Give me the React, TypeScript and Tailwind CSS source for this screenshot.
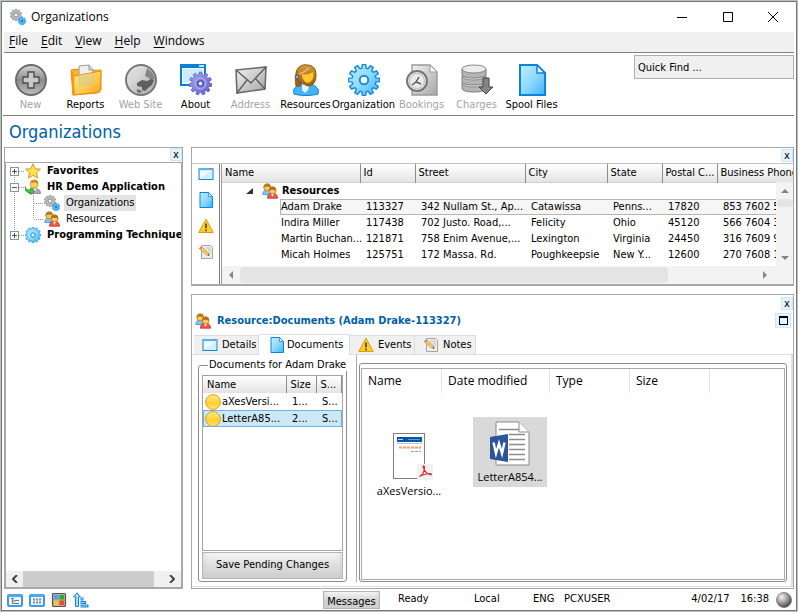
import React from "react";

const tahoma = "font-['DejaVu_Sans_Condensed','DejaVu_Sans',sans-serif]";
const segoe = "font-['Open_Sans','Noto_Sans',sans-serif]";

type IconProps = { size?: number };

function gearPath(c: number, outer: number, inner: number, teeth: number) {
  const pts: string[] = [];
  const step = (Math.PI * 2) / teeth;
  for (let i = 0; i < teeth; i++) {
    const a = i * step;
    const at = (r: number, t: number) =>
      `${(c + r * Math.sin(a + t * step)).toFixed(2)} ${(c - r * Math.cos(a + t * step)).toFixed(2)}`;
    pts.push(at(inner, -0.34), at(outer, -0.2), at(outer, 0.2), at(inner, 0.34));
  }
  return `M${pts.join("L")}Z`;
}

function Defs() {
  return (
    <svg width="0" height="0" className="absolute" aria-hidden="true">
      <defs>
        <linearGradient id="gGray" x1="0" y1="0" x2="1" y2="1">
          <stop offset="0" stopColor="#f2f2f2" />
          <stop offset="1" stopColor="#a6a6a6" />
        </linearGradient>
        <linearGradient id="gDark" x1="0" y1="0" x2="0" y2="1">
          <stop offset="0" stopColor="#d8d8d8" />
          <stop offset="0.5" stopColor="#8a8a8a" />
          <stop offset="1" stopColor="#bdbdbd" />
        </linearGradient>
        <linearGradient id="gBlue" x1="0" y1="0" x2="1" y2="1">
          <stop offset="0" stopColor="#c4ecff" />
          <stop offset="0.5" stopColor="#8fd9ff" />
          <stop offset="1" stopColor="#3fb4f7" />
        </linearGradient>
        <linearGradient id="gOrange" x1="0" y1="0" x2="1" y2="1">
          <stop offset="0" stopColor="#fff3a0" />
          <stop offset="0.5" stopColor="#ffd75a" />
          <stop offset="1" stopColor="#ff9a1c" />
        </linearGradient>
        <linearGradient id="gHair" x1="0" y1="0" x2="0" y2="1">
          <stop offset="0" stopColor="#d79a3c" />
          <stop offset="1" stopColor="#9a5c0a" />
        </linearGradient>
        <linearGradient id="gViolet" x1="0" y1="0" x2="1" y2="1">
          <stop offset="0" stopColor="#aaa8f0" />
          <stop offset="1" stopColor="#5f5cc9" />
        </linearGradient>
        <radialGradient id="gBall" cx="0.35" cy="0.3" r="0.7">
          <stop offset="0" stopColor="#f4f4f4" />
          <stop offset="0.5" stopColor="#a5a5a5" />
          <stop offset="1" stopColor="#4e4e4e" />
        </radialGradient>
        <linearGradient id="gSun" x1="0" y1="0" x2="0" y2="1">
          <stop offset="0" stopColor="#ffe98a" />
          <stop offset="0.6" stopColor="#ffcf2e" />
          <stop offset="1" stopColor="#ffe680" />
        </linearGradient>
      </defs>
    </svg>
  );
}

function Svg({ size, box, children }: { size: number; box: number; children: React.ReactNode }) {
  return (
    <svg width={size} height={size} viewBox={`0 0 ${box} ${box}`} className="block shrink-0" aria-hidden="true">
      {children}
    </svg>
  );
}

const NewIcon = () => (
  <Svg size={32} box={32}>
    <circle cx="16" cy="16" r="15" fill="url(#gDark)" stroke="#6b6b6b" strokeWidth="2" />
    <path d="M13 8h6v5h5v6h-5v5h-6v-5H8v-6h5z" fill="#c9c9c9" stroke="#4f4f4f" strokeWidth="1.4" />
  </Svg>
);

const ReportsIcon = () => (
  <Svg size={32} box={32}>
    <path d="M1 6l9-1 2 2 19-1v20l-4 3-24 2z" fill="#ffb428" stroke="#f08a08" />
    <path d="M9 2l10-1 4 4v14H9z" fill="#efefef" stroke="#999" />
    <path d="M19 1v5h5" fill="#d5d5d5" stroke="#999" />
    <path d="M4 12l27-5-1 21-27 3z" fill="url(#gOrange)" fillOpacity="0.85" stroke="#f38f0d" />
    <path d="M8 12l16-3v12l-15 2z" fill="#d8c48a" fillOpacity="0.6" />
    <path d="M2 8l2 22" stroke="#ff9414" strokeWidth="2" />
  </Svg>
);

const GlobeIcon = () => (
  <Svg size={32} box={32}>
    <circle cx="16" cy="16" r="15" fill="url(#gGray)" stroke="#777" strokeWidth="2" />
    <path d="M4 9l5-4 6-2 2 5-4 3-1 5-5 2-4-2z" fill="#d9d9d9" />
    <path d="M22 4l5 4 3 6-3 3-3-3-4-2 1-4z" fill="#858585" />
    <path d="M12 19l5-3 5 1 4-2 3 1-2 5-4 3-3 3-3-1v-3l-5-1z" fill="#5f5f5f" />
    <path d="M12 25l5 2-2 2-3-1z" fill="#6d6d6d" />
  </Svg>
);

const AboutIcon = () => (
  <Svg size={32} box={32}>
    <rect x="1" y="2" width="24" height="19" fill="#f2fbff" stroke="#0a7fd6" strokeWidth="2" />
    <rect x="0" y="0" width="26" height="4" fill="#0a7fd6" />
    <rect x="19" y="1" width="5" height="2" fill="#bfe5ff" />
    <path d="M3 5h20v8L5 19H3z" fill="#c9efff" />
    <g transform="translate(9 8)">
      <path d={gearPath(11.5, 11.4, 8.8, 11)} fill="url(#gViolet)" stroke="#5a57c0" strokeWidth="0.8" />
      <circle cx="11.5" cy="11.5" r="5.5" fill="#8b88e0" stroke="#b9b7f5" />
      <circle cx="11.5" cy="11.5" r="2.6" fill="#e6f3ff" stroke="#4845b0" strokeWidth="1.4" />
    </g>
  </Svg>
);

const AddressIcon = () => (
  <Svg size={32} box={32}>
    <path d="M1 6l30-3-1 22-28 4z" fill="url(#gGray)" stroke="#6c6c6c" strokeWidth="1.6" />
    <path d="M1 6l15 13L31 3M2 29l10-13M30 25L20 14" fill="none" stroke="#5d5d5d" strokeWidth="1.3" />
  </Svg>
);

const ResourcesIcon = () => (
  <Svg size={32} box={32}>
    <path d="M4 30c-1-4 0-7 5-9h14c5 2 6 5 5 9-7 2-17 2-24 0z" fill="#48b2f2" stroke="#0b80d2" />
    <path d="M12 19h8l-2 7-3 3-3-3z" fill="#e3f4ff" />
    <path d="M6 22C5 17 6 12 6 9 7 3 12 0 17 1c6 0 9 4 9 10 0 4-1 8-4 10l-3 1c-4 0-6-3-7-5l-2 5z" fill="url(#gHair)" stroke="#8a5208" />
    <path d="M12 10c4 1 8 0 11-2 1 5 0 9-5 11-4-1-6-4-6-9z" fill="#ffc933" />
    <path d="M9 10c4-1 8-4 10-6" fill="none" stroke="#e9bd70" strokeWidth="1.3" />
    <circle cx="7" cy="13" r="2" fill="#a7a7a7" stroke="#555" />
    <path d="M7 15c2 4 4 5 7 5" fill="none" stroke="#444" />
  </Svg>
);

const GearIcon = ({ size = 32 }: IconProps) => (
  <Svg size={size} box={32}>
    <path d={gearPath(16, 15.6, 12, 12)} fill="url(#gBlue)" stroke="#148fe0" strokeWidth="1.5" />
    <circle cx="16" cy="16" r="4.2" fill="#fff" stroke="#148fe0" strokeWidth="2" />
  </Svg>
);

const BookingsIcon = () => (
  <Svg size={32} box={32}>
    <path d="M6 1h18l7 7v23H6z" fill="url(#gGray)" stroke="#999" strokeWidth="1.4" />
    <path d="M24 1v7h7z" fill="#fff" stroke="#999" />
    <circle cx="11" cy="17" r="10" fill="#e9e9e9" stroke="#777" strokeWidth="2" />
    <circle cx="11" cy="17" r="7.5" fill="none" stroke="#bbb" />
    <path d="M13 13l-3 5 5 2M10 18l-4 3" fill="none" stroke="#555" strokeWidth="1.4" />
  </Svg>
);

const ChargesIcon = () => (
  <Svg size={32} box={32}>
    {[22, 15, 8].map((y) => (
      <g key={y}>
        <path d={`M1 ${y - 3}v5c0 3 6 4 12 4s12-1 12-4v-5z`} fill="#b5b5b5" stroke="#777" />
        <ellipse cx="13" cy={y - 3} rx="12" ry="4" fill="#ececec" stroke="#888" />
      </g>
    ))}
    <path d="M22 14h6v9h4l-7 7-7-7h4z" fill="#858585" stroke="#444" />
  </Svg>
);

const FileIcon = ({ size = 32 }: IconProps) => (
  <Svg size={size} box={32}>
    <path d="M4 1h17l8 8v22H4z" fill="url(#gBlue)" stroke="#0b84dc" strokeWidth="2" />
    <path d="M21 1v8h8z" fill="#f0faff" stroke="#0b84dc" strokeWidth="1.5" />
  </Svg>
);

const WindowIcon = () => (
  <Svg size={16} box={16}>
    <rect x="1" y="2.5" width="14" height="11" fill="#d3f1ff" stroke="#1686da" />
    <rect x="1" y="2" width="14" height="2" fill="#55b4f0" />
    <rect x="12" y="2" width="2" height="1" fill="#ff5a3c" />
    <path d="M2 12V5h11z" fill="#fff" fillOpacity="0.7" />
  </Svg>
);

const WarningIcon = () => (
  <Svg size={16} box={16}>
    <path d="M8 1.2L15.3 14.5H.7z" fill="#ffcb2f" stroke="#dd9a10" strokeLinejoin="round" />
    <path d="M8 5.5v4.7M8 11.5v1.7" stroke="#4a3a00" strokeWidth="1.6" />
  </Svg>
);

const NoteIcon = () => (
  <Svg size={16} box={16}>
    <path d="M3.5 1.5h9l2 2v11h-11z" fill="#ececec" stroke="#a5a5a5" />
    <path d="M8 4h4M10 6h3M11 8h2" stroke="#bbb" />
    <path d="M1.200 4.500l2-2 7.300 6.300.8 2.700-2.800-.7z" fill="#ffc95a" stroke="#b9822e" strokeWidth="0.6" />
    <path d="M1.200 4.500l2-2 1.300 1.100-2 2z" fill="#e8746b" />
    <path d="M11.300 11.500l-1.800-.4 1.300-1.300z" fill="#333" />
  </Svg>
);

const OrgIcon = () => (
  <Svg size={16} box={16}>
    <path d={gearPath(6, 5.8, 4.4, 10)} fill="#bdbdbd" stroke="#8a8a8a" strokeWidth="0.7" />
    <circle cx="6" cy="6" r="2" fill="#fff" stroke="#8a8a8a" />
    <g transform="translate(8 8)">
      <path d={gearPath(4, 3.9, 2.9, 9)} fill="#4fbaf8" stroke="#1b93e4" strokeWidth="0.7" />
      <circle cx="4" cy="4" r="1.1" fill="#1b6ac0" />
    </g>
  </Svg>
);

const PeopleIcon = () => (
  <Svg size={16} box={16}>
    <path d="M.8 11.500c0-3.500 2-4.500 4.500-4.500S9 8 9 11.500z" fill="#7cc6f5" stroke="#2b84c8" strokeWidth="0.7" />
    <circle cx="5.200" cy="4.500" r="3.400" fill="#ffcb54" stroke="#a5701a" strokeWidth="0.700" />
    <path d="M1.800 4.800C1.300 1 4 .3 6.200.6c2.200.3 2.800 2.200 2.300 3.400C6.500 4 4 3 1.800 4.800z" fill="#b87a1c" />
    <path d="M5.500 15.200c0-3.700 2-5 5-5s5 1.500 5 5z" fill="#f0584e" stroke="#b91d15" strokeWidth="0.7" />
    <path d="M9 10.700h3l-1.500 3z" fill="#fff" />
    <circle cx="10.700" cy="7.500" r="3.400" fill="#ffcb54" stroke="#a5701a" strokeWidth="0.700" />
    <path d="M7.200 7.700c-.5-3.700 2-4.400 4.100-4.100 2.100.3 3.100 2.100 2.600 4.100-2-.6-4-1.700-6.700 0z" fill="#b5711a" />
  </Svg>
);

const StarIcon = () => (
  <Svg size={16} box={16}>
    <path d="M8 .8l2.200 4.900 5.200.5-3.900 3.600 1.100 5.300L8 12.400l-4.600 2.700 1.100-5.300L.6 6.200l5.200-.5z" fill="#ffdf5a" stroke="#d99a12" strokeLinejoin="round" />
  </Svg>
);

const AppIcon = () => (
  <Svg size={16} box={16}>
    <path d="M4 14.500c0-4 2-5 5.500-5s6 1 6 5z" fill="#a9a9ae" stroke="#77777d" strokeWidth="0.7" />
    <path d="M8.500 9.500h3l-1.500 3z" fill="#fff" />
    <circle cx="9.200" cy="5" r="4" fill="#ffd257" stroke="#c78a15" strokeWidth="0.7" />
    <path d="M5.200 4.500C5.400 1.500 7.400.6 9.900.8c2.500.3 3.500 2 3.200 4-2-1-4.500-2-7.900-.3z" fill="#c58e2a" />
    <path d="M.3 7.500c.2 2.500 2 3.800 5.200 3.500V8.800l4 3.600-4 3.200v-2C1.500 14-.6 11.500.3 7.500z" fill="#4cc348" stroke="#1f8a20" strokeWidth="0.7" />
  </Svg>
);

const CoinIcon = () => (
  <Svg size={16} box={16}>
    <circle cx="8" cy="8" r="7.400" fill="url(#gSun)" stroke="#e0a21c" />
  </Svg>
);

const CalendarIcon = ({ tree }: { tree?: boolean }) => (
  <Svg size={16} box={16}>
    <rect x="1" y="3" width="14" height="11" rx="1" fill="#e9f6ff" stroke="#3f9be4" strokeWidth="2" />
    <rect x="1" y="2" width="14" height="3" fill="#4aa8ee" />
    {tree ? (
      <path d="M4 6.500h3M5.500 6.500v5h3M5.500 9h3M8 8.500h4M8 11.500h4" fill="none" stroke="#777" />
    ) : (
      <path d="M4 7.500h2M7 7.500h2M10 7.500h2M4 10.500h2M7 10.500h2M10 10.500h2" stroke="#8a8a8a" strokeWidth="2" />
    )}
  </Svg>
);

const ColorsIcon = () => (
  <Svg size={16} box={16}>
    <rect x="1.500" y="1.500" width="13" height="13" rx="1" fill="#b5b0ac" stroke="#5c5350" strokeWidth="1.200" />
    <rect x="3" y="3" width="4.500" height="4.500" fill="#4ba3ea" />
    <rect x="8.500" y="3" width="4.500" height="4.500" fill="#2eaa2e" />
    <rect x="3" y="8.500" width="4.500" height="4.500" fill="#ffc22e" />
    <rect x="8.500" y="8.500" width="4.500" height="4.500" fill="#ff4318" />
  </Svg>
);

const SortIcon = () => (
  <Svg size={16} box={16}>
    <path d="M4 .8L7.500 5H5.500v9.500h-3V5H.5z" fill="#a5dcfc" stroke="#1687d8" />
    <path d="M7.500 7h3M7.500 10.500h5.500M7.500 14h8" stroke="#1687d8" strokeWidth="3" />
    <path d="M8 7h2M8 10.500h4M8 14h6.500" stroke="#8bd0fb" />
  </Svg>
);

const PdfThumb = () => (
  <svg width="40" height="48" viewBox="0 0 40 48" className="block" aria-hidden="true">
    <rect x="0.500" y="0.500" width="31" height="45" fill="#fff" stroke="#7d7d7d" />
    <rect x="4" y="4" width="25" height="5" fill="#0a55a8" />
    <rect x="5" y="6" width="5" height="1" fill="#bfe0ff" />
    <rect x="15" y="6" width="12" height="1" fill="#5f9ad5" />
    <path d="M4 10.500h25" stroke="#a9c9e6" />
    <path d="M6 14.500h22" stroke="#ff9b63" strokeWidth="2" strokeDasharray="3 1" />
    <path d="M18 18.500h10" stroke="#7aa3cc" strokeDasharray="3 1" />
    <rect x="24" y="31" width="16" height="16" rx="2" fill="#f1f1f1" />
    <path d="M26.500 43.500c3-1.500 5-5.500 5-9.500-.8-2-2-1.300-1 1 1.200 3.700 3.500 6 7.300 7 1.200-.8.200-2-2-1.300-3.800-.2-6.300.8-9.300 2.800z" fill="none" stroke="#d9262c" strokeWidth="1.100" />
  </svg>
);

const WordDoc = () => (
  <svg width="40" height="46" viewBox="0 0 40 46" className="block" aria-hidden="true">
    <path d="M6 1h23l10 10v33H6z" fill="#fff" stroke="#8a8a8a" />
    <path d="M29 1v10h10" fill="#fff" stroke="#8a8a8a" />
    <path d="M9 8.500h20M19 13.500h16M19 18.500h16M19 23.500h16M19 28.500h16M19 33.500h16M19 38.500h16" stroke="#8c8c8c" strokeWidth="1.500" />
    <path d="M0 16l18-3v28L0 38z" fill="#2a5699" />
    <path d="M3.500 21.500L6 32.500l3-10 3 10 2.500-11" fill="none" stroke="#fff" strokeWidth="2.400" />
  </svg>
);

const tools = [
  { label: "New", icon: <NewIcon />, off: true },
  { label: "Reports", icon: <ReportsIcon /> },
  { label: "Web Site", icon: <GlobeIcon />, off: true },
  { label: "About", icon: <AboutIcon /> },
  { label: "Address", icon: <AddressIcon />, off: true },
  { label: "Resources", icon: <ResourcesIcon /> },
  { label: "Organization", icon: <GearIcon />, wide: true },
  { label: "Bookings", icon: <BookingsIcon />, off: true },
  { label: "Charges", icon: <ChargesIcon />, off: true },
  { label: "Spool Files", icon: <FileIcon /> },
];

const people = [
  ["Adam Drake", "113327", "342 Nullam St., Ap...", "Catawissa", "Penns...", "17820", "853 7602 5"],
  ["Indira Miller", "117438", "702 Justo. Road,...", "Felicity", "Ohio", "45120", "566 7604 3"],
  ["Martin Buchan...", "121871", "758 Enim Avenue,...", "Lexington", "Virginia", "24450", "316 7609 9"],
  ["Micah Holmes", "125751", "172 Massa. Rd.", "Poughkeepsie", "New Y...", "12600", "270 7608 1"],
];

function CloseX({ label }: { label: string }) {
  return (
    <button aria-label={label} className="flex h-[13px] w-3 items-center justify-center border border-[#cce8ff] bg-[#e5f3ff] text-[11px] leading-3">
      x
    </button>
  );
}

function Expander({ open, first, last, label }: { open?: boolean; first?: boolean; last?: boolean; label: string }) {
  return (
    <button aria-label={label} className="block shrink-0">
      <svg width="19" height="16" viewBox="0 0 19 16" className="block" aria-hidden="true">
        <path d={`M8.500 ${first ? 8 : 0}V${last ? 8 : 16}M13 8.500h6`} stroke="#999" strokeDasharray="1 1" />
        <rect x="4.500" y="4.500" width="8" height="8" fill="#fff" stroke="#919191" />
        <path d={open ? "M6 8.500h5" : "M6 8.500h5M8.500 6v5"} stroke="#3550a0" />
      </svg>
    </button>
  );
}

function Branch({ last }: { last?: boolean }) {
  return (
    <svg width="38" height="16" viewBox="0 0 38 16" className="block shrink-0" aria-hidden="true">
      <path d={`M8.500 0V16M27.500 0V${last ? 8 : 16}M28 8.500h10`} stroke="#999" strokeDasharray="1 1" />
    </svg>
  );
}

function Tree() {
  const row = "flex h-4 items-center whitespace-nowrap";
  return (
    <ul className="min-h-0 flex-1 overflow-hidden text-[11px] leading-4">
      <li className={row}>
        <Expander label="Expand Favorites" first />
        <StarIcon />
        <span className="pl-1.5 font-bold">Favorites</span>
      </li>
      <li className={row}>
        <Expander label="Collapse HR Demo Application" open />
        <AppIcon />
        <span className="pl-1.5 font-bold">HR Demo Application</span>
      </li>
      <li className={row}>
        <Branch />
        <OrgIcon />
        <span className="ml-1 bg-[#e2e2e2] px-0.5">Organizations</span>
      </li>
      <li className={row}>
        <Branch last />
        <PeopleIcon />
        <span className="ml-1 px-0.5">Resources</span>
      </li>
      <li className={row}>
        <Expander label="Expand Programming Techniques" last />
        <GearIcon size={16} />
        <span className="pl-1.5 font-bold">Programming Techniques</span>
      </li>
    </ul>
  );
}

function Arrow({ d, color = "#858585" }: { d: string; color?: string }) {
  return (
    <svg width="8" height="8" viewBox="0 0 8 8" aria-hidden="true">
      <path d={d} fill={color} />
    </svg>
  );
}

function ResourceGrid() {
  const head = "border-r border-[#8c8c8c] bg-linear-to-b from-white to-[#e3e3e3] p-0 pl-[3px] text-left font-normal";
  const picked = "h-4 border-y border-[#b5b5b5] bg-[#f6f6f6] leading-[14px]";
  return (
    <div className="flex min-w-0 flex-1 flex-col overflow-hidden border-l border-[#9a9aa0]">
      <div className="relative min-h-0 flex-1 overflow-hidden">
        <table className="w-[620px] table-fixed border-collapse whitespace-nowrap text-[11px] leading-4">
          <colgroup>
            <col className="w-[138px]" />
            <col className="w-[55px]" />
            <col className="w-[110px]" />
            <col className="w-[82px]" />
            <col className="w-[55px]" />
            <col className="w-[55px]" />
            <col />
          </colgroup>
          <thead>
            <tr className="h-[18px] border-b border-[#d0d0d0]">
              {["Name", "Id", "Street", "City", "State", "Postal C...", "Business Phone"].map((h) => (
                <th key={h} scope="col" className={head}>{h}</th>
              ))}
            </tr>
          </thead>
          <tbody>
            <tr className="h-4">
              <th colSpan={7} scope="rowgroup" className="p-0">
                <div className="flex h-4 items-center pl-6">
                  <Arrow d="M7 1v6H0z" color="#333" />
                  <span className="w-2" />
                  <PeopleIcon />
                  <span className="pl-1">Resources</span>
                </div>
              </th>
            </tr>
            {people.map((p, i) => (
              <tr key={p[1]} className="h-4">
                {p.map((v, c) => (
                  <td key={c} className={c === 0 ? "p-0 pl-[58px]" : "p-0"}>
                    <div className={`${i === 0 ? picked : "h-4"} ${c === 0 ? (i === 0 ? "border-l" : "pl-px") : "pl-1.5"}`}>{v}</div>
                  </td>
                ))}
              </tr>
            ))}
          </tbody>
        </table>
        <div className="absolute top-[18px] right-0 bottom-0 flex w-[17px] flex-col items-center bg-[#f3f3f3]">
          <div className="flex h-[17px] items-center"><Arrow d="M0 6l4-4 4 4z" /></div>
          <div className="h-2 w-4 rounded-sm bg-[#e4e4e4]" />
          <div className="flex-1" />
          <div className="flex h-[17px] items-center"><Arrow d="M0 2l4 4 4-4z" /></div>
        </div>
      </div>
      <div className="flex h-[18px] shrink-0 items-center bg-[#f3f3f3]">
        <div className="flex w-[18px] justify-center"><Arrow d="M6 0L2 4l4 4z" /></div>
        <div className="h-4 w-3/4 rounded-sm bg-[#e4e4e4]" />
        <div className="flex-1" />
        <div className="flex w-8 justify-start"><Arrow d="M2 0l4 4-4 4z" /></div>
      </div>
    </div>
  );
}

function Tabs() {
  const off = "flex h-[19px] items-center gap-1 self-end border-t border-r border-[#dcdcdc] bg-[#f0f0f0] pl-2 pr-1";
  return (
    <div role="tablist" className="flex h-[21px] shrink-0 border-b border-[#dcdcdc] pl-0.5 text-[11px] leading-4">
      <button role="tab" aria-selected="false" className={`${off} w-[65px]`}><WindowIcon />Details</button>
      <button role="tab" aria-selected="true" className="-mb-px flex h-[21px] w-[91px] items-center gap-0.5 border-t border-r border-[#dcdcdc] bg-white pl-2.5">
        <FileIcon size={16} />Documents
      </button>
      <button role="tab" aria-selected="false" className={`${off} w-[65px]`}><WarningIcon />Events</button>
      <button role="tab" aria-selected="false" className={`${off} w-[61px]`}><NoteIcon />Notes</button>
    </div>
  );
}

const silver = "border border-[#b4b4b4] bg-linear-to-b from-[#f4f4f4] via-[#dedede] via-50% to-[#ededed] shadow-[inset_0_-8px_6px_#cfcfcf]";

function DocumentsGroup() {
  const th = "border-r border-[#8c8c8c] bg-linear-to-b from-white to-[#e3e3e3] p-0 pl-1 text-left font-normal";
  return (
    <fieldset className="mt-1 mb-1 ml-1.5 flex w-[149px] min-w-0 shrink-0 flex-col rounded-[3px] border border-[#98888a] px-[3px] pb-0.5">
      <legend className="ml-1.5 px-px text-[11px] leading-3 whitespace-nowrap">Documents for Adam Drake</legend>
      <div className="mt-1 flex flex-1 flex-col">
        <div className="flex-1 border border-[#a3a3a8]">
          <table className="w-full table-fixed border-collapse text-[11px] leading-4 whitespace-nowrap">
            <colgroup>
              <col className="w-[83px]" />
              <col className="w-[30px]" />
              <col />
            </colgroup>
            <thead>
              <tr className="h-[17px]">
                <th scope="col" className={th}>Name</th>
                <th scope="col" className={th}>Size</th>
                <th scope="col" className={th}>S...</th>
              </tr>
            </thead>
            <tbody>
              <tr className="h-[17px]">
                <td className="p-0"><div className="flex items-center gap-px pl-0.5"><CoinIcon />aXesVersi...</div></td>
                <td className="p-0 pl-1.5">1...</td>
                <td className="p-0 pl-1.5">S...</td>
              </tr>
              <tr className="h-[17px] bg-[#cce8f6] outline outline-[#6fb1e6] -outline-offset-1">
                <td className="p-0"><div className="flex items-center gap-px pl-0.5"><CoinIcon />LetterA85...</div></td>
                <td className="p-0 pl-1.5">2...</td>
                <td className="p-0 pl-1.5">S...</td>
              </tr>
            </tbody>
          </table>
        </div>
        <button className={`mt-px h-[27px] text-[11px] ${silver}`}>Save Pending Changes</button>
      </div>
    </fieldset>
  );
}

function Explorer() {
  const cell = "border-r border-[#e2e2e2] pl-1.5";
  return (
    <div className="mt-2 mr-1 mb-1 ml-0.5 flex min-w-0 flex-1 rounded-[3px] border border-[#98888a] p-px pt-1">
      <div className={`flex-1 border border-[#a9a9ae] text-[12px] ${segoe}`}>
        <div className="flex h-6 leading-6">
          <div className={`w-20 ${cell}`}>Name</div>
          <div className={`w-[108px] ${cell}`}>Date modified</div>
          <div className={`w-20 ${cell}`}>Type</div>
          <div className={`w-20 ${cell}`}>Size</div>
        </div>
        <div className="flex gap-[26px] pt-6 pl-[9px] text-[11px] leading-4">
          <figure className="flex w-[76px] flex-col items-center pt-4">
            <div className="pl-2"><PdfThumb /></div>
            <figcaption className="pt-0.5">aXesVersio...</figcaption>
          </figure>
          <figure className="flex h-[70px] w-[74px] flex-col items-center bg-[#d9d9d9] pt-1">
            <WordDoc />
            <figcaption className="pt-0.5">LetterA854...</figcaption>
          </figure>
        </div>
      </div>
    </div>
  );
}

export default function App() {
  return (
    <div className={`flex h-screen flex-col bg-[#bcc0bc] p-px text-black ${tahoma}`}>
      <Defs />
      <div className="flex min-h-0 flex-1 flex-col border border-[#717c72] bg-white">
        <header className={`flex h-[30px] shrink-0 items-center pl-2 text-[12px] ${segoe}`}>
          <OrgIcon />
          <h1 className="flex-1 pl-[5px]">Organizations</h1>
          <button aria-label="Minimize" className="flex w-[46px] justify-center">
            <svg width="10" height="10"><path d="M0 5.500h10" stroke="#000" /></svg>
          </button>
          <button aria-label="Maximize" className="flex w-[45px] justify-center">
            <svg width="10" height="10"><path d="M.5.5h9v9h-9z" fill="none" stroke="#000" /></svg>
          </button>
          <button aria-label="Close" className="flex w-[46px] justify-center">
            <svg width="10" height="10"><path d="M0 0l10 10M10 0L0 10" stroke="#000" /></svg>
          </button>
        </header>
        <nav className={`mx-0.5 flex h-[21px] shrink-0 items-start gap-[13px] border-b border-[#808080] bg-[#f0f0f0] pl-[5px] text-[12px] leading-[18px] ${segoe}`}>
          {["File", "Edit", "View", "Help", "Windows"].map((m) => (
            <button key={m}><span className="underline underline-offset-2">{m[0]}</span>{m.slice(1)}</button>
          ))}
        </nav>
        <div className="mr-0.5 ml-px flex h-[63px] shrink-0 items-start justify-between border-b border-[#808080]">
          <div className="flex pt-[11px]">
            {tools.map((t) => (
              <button
                key={t.label}
                disabled={t.off}
                className={`flex flex-col items-center gap-px text-[11px] leading-4 whitespace-nowrap disabled:text-[#a3a3a3] ${t.wide ? "w-[61px]" : "w-[55px]"}`}
              >
                {t.icon}
                <span>{t.label}</span>
              </button>
            ))}
          </div>
          <input
            aria-label="Quick Find"
            placeholder="Quick Find ..."
            className="mt-0.5 h-6 w-40 border border-[#acacb1] bg-[#f0f0f0] px-[3px] text-[11px] placeholder:text-black"
          />
        </div>
        <h2 className="h-[31px] shrink-0 pl-[7px] text-[18px] leading-[31px] text-[#0060a8]">Organizations</h2>
        <main className="mx-0.5 flex min-h-0 flex-1 gap-2">
          <aside className="flex w-[179px] shrink-0 flex-col border border-[#a7a7ac]">
            <div className="flex h-3.5 shrink-0 justify-end"><CloseX label="Close tree" /></div>
            <div className="flex min-h-0 flex-1 flex-col border border-[#a7a7ac]">
              <Tree />
              <div className="flex h-4 shrink-0 items-center bg-[#f0f0f0]">
                <div className="flex w-[17px] justify-center">
                  <svg width="6" height="8"><path d="M5 0L1 4l4 4" fill="none" stroke="#444" strokeWidth="2" /></svg>
                </div>
                <div className="h-4 w-[131px] bg-[#cdcdcd]" />
                <div className="flex flex-1 justify-end pr-1.5">
                  <svg width="6" height="8"><path d="M1 0l4 4-4 4" fill="none" stroke="#444" strokeWidth="2" /></svg>
                </div>
              </div>
            </div>
          </aside>
          <div className="flex min-w-0 flex-1 flex-col gap-2">
            <section className="flex h-[139px] shrink-0 flex-col border border-b-2 border-[#a7a7ac]">
              <div className="flex h-[15px] shrink-0 justify-end pt-px"><CloseX label="Close list" /></div>
              <div className="flex min-h-0 flex-1 border-t border-[#c4c4c4]">
                <div className="mr-px flex w-7 flex-col items-center gap-2.5 border-r border-[#808080] pt-0.5">
                  <button aria-label="Details"><WindowIcon /></button>
                  <button aria-label="Documents"><FileIcon size={16} /></button>
                  <button aria-label="Events"><WarningIcon /></button>
                  <button aria-label="Notes"><NoteIcon /></button>
                </div>
                <ResourceGrid />
              </div>
            </section>
            <section className="flex min-h-0 flex-1 flex-col border border-[#a7a7ac]">
              <div className="flex h-[17px] shrink-0 justify-end pt-0.5"><CloseX label="Close details" /></div>
              <div className="flex h-[22px] shrink-0 items-start justify-between pr-0.5 pl-[3px]">
                <h3 className="flex items-center gap-1.5 text-[11px] leading-[18px] font-bold text-[#0060a8]">
                  <PeopleIcon />Resource:Documents (Adam Drake-113327)
                </h3>
                <button aria-label="Maximize pane" className="mt-px flex h-[15px] w-4 items-center justify-center border border-[#cce8ff] bg-[#e5f3ff]">
                  <span className="block h-[9px] w-[9px] border border-t-2 border-black" />
                </button>
              </div>
              <Tabs />
              <div className="mb-px flex min-h-0 flex-1 border-r-2 border-b border-[#dedede]">
                <DocumentsGroup />
                <div className="mb-1 w-[10px] shrink-0 border-r border-[#a9a9ae]" />
                <Explorer />
              </div>
            </section>
          </div>
        </main>
        <footer className="flex h-[21px] shrink-0 items-center pr-1 pl-[5px] text-[11px]">
          <div className="flex w-[316px] gap-1.5">
            <button aria-label="Tree view"><CalendarIcon tree /></button>
            <button aria-label="Calendar view"><CalendarIcon /></button>
            <button aria-label="Colors"><ColorsIcon /></button>
            <button aria-label="Sort"><SortIcon /></button>
          </div>
          <button className={`h-[18px] w-[57px] pt-0.5 leading-4 ${silver}`}>Messages</button>
          <span className="w-[94px] pl-[18px]">Ready</span>
          <span className="w-[59px]">Local</span>
          <span className="w-[31px]">ENG</span>
          <span className="flex-1">PCXUSER</span>
          <span className="pr-[11px]">4/02/17</span>
          <span className="pr-[7px]">16:38</span>
          <svg width="16" height="16" aria-hidden="true"><circle cx="8" cy="8" r="7.500" fill="url(#gBall)" stroke="#666" strokeWidth="0.700" /></svg>
        </footer>
      </div>
    </div>
  );
}
